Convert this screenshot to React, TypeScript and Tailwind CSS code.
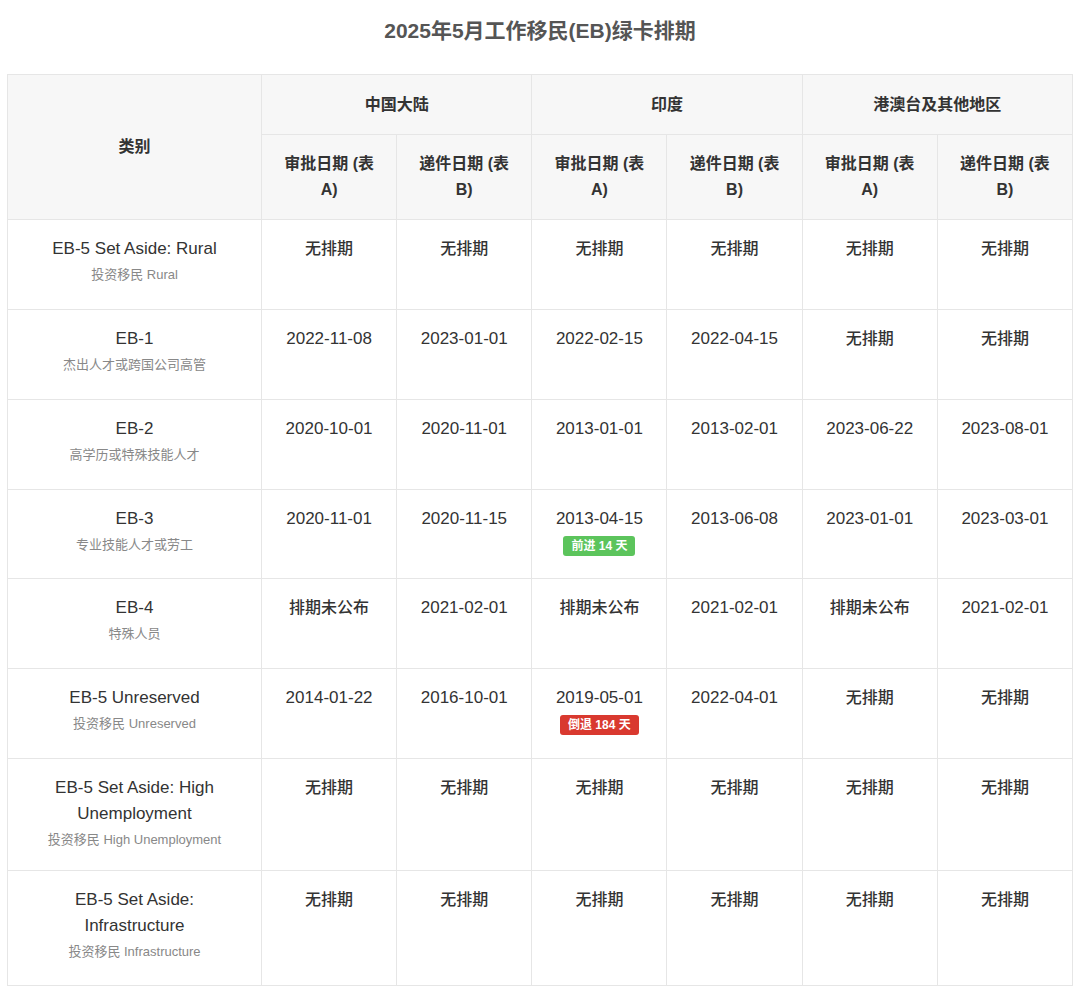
const font = { fontFamily: '"Liberation Sans", "Noto Sans CJK SC", sans-serif' };

type Cell = string | { v: string; tag: string; up: boolean };

const rows: { name: string; sub: string; h: string; cells: Cell[] }[] = [
  { name: "EB-5 Set Aside: Rural", sub: "投资移民 Rural", h: "h-[90px]", cells: ["无排期", "无排期", "无排期", "无排期", "无排期", "无排期"] },
  { name: "EB-1", sub: "杰出人才或跨国公司高管", h: "h-[90px]", cells: ["2022-11-08", "2023-01-01", "2022-02-15", "2022-04-15", "无排期", "无排期"] },
  { name: "EB-2", sub: "高学历或特殊技能人才", h: "h-[90px]", cells: ["2020-10-01", "2020-11-01", "2013-01-01", "2013-02-01", "2023-06-22", "2023-08-01"] },
  { name: "EB-3", sub: "专业技能人才或劳工", h: "h-[89px]", cells: ["2020-11-01", "2020-11-15", { v: "2013-04-15", tag: "前进 14 天", up: true }, "2013-06-08", "2023-01-01", "2023-03-01"] },
  { name: "EB-4", sub: "特殊人员", h: "h-[90px]", cells: ["排期未公布", "2021-02-01", "排期未公布", "2021-02-01", "排期未公布", "2021-02-01"] },
  { name: "EB-5 Unreserved", sub: "投资移民 Unreserved", h: "h-[90px]", cells: ["2014-01-22", "2016-10-01", { v: "2019-05-01", tag: "倒退 184 天", up: false }, "2022-04-01", "无排期", "无排期"] },
  { name: "EB-5 Set Aside: High Unemployment", sub: "投资移民 High Unemployment", h: "h-[112px]", cells: ["无排期", "无排期", "无排期", "无排期", "无排期", "无排期"] },
  { name: "EB-5 Set Aside: Infrastructure", sub: "投资移民 Infrastructure", h: "h-[115px]", cells: ["无排期", "无排期", "无排期", "无排期", "无排期", "无排期"] },
];

const bd = "border border-[#e6e6e6]";

export default function App() {
  return (
    <div className="w-[1080px] h-[987px] overflow-hidden bg-white text-[#333]" style={font}>
      <h1 className="text-center text-[21px] font-bold text-[#555] pt-[16px] pb-[28px] leading-[30px]">
        2025年5月工作移民(EB)绿卡排期
      </h1>
      <div className="px-[7px]">
        <table className="w-full border-collapse table-fixed text-[17px]">
          <colgroup>
            <col className="w-[254px]" />
            <col /><col /><col /><col /><col /><col />
          </colgroup>
          <thead className="bg-[#f7f7f7] font-bold text-[16px]">
            <tr className="h-[60px]">
              <th rowSpan={2} className={bd}>类别</th>
              <th colSpan={2} className={bd}>中国大陆</th>
              <th colSpan={2} className={bd}>印度</th>
              <th colSpan={2} className={bd}>港澳台及其他地区</th>
            </tr>
            <tr className="h-[85px]">
              {["审批日期 (表A)", "递件日期 (表B)", "审批日期 (表A)", "递件日期 (表B)", "审批日期 (表A)", "递件日期 (表B)"].map((t, i) => (
                <th key={i} className={`${bd} px-4 leading-[26px]`}>{t}</th>
              ))}
            </tr>
          </thead>
          <tbody>
            {rows.map((r) => (
              <tr key={r.name} className={r.h}>
                <td className={`${bd} align-top text-center px-5 pt-[16px] leading-[26px]`}>
                  <div>{r.name}</div>
                  <div className="text-[13px] text-[#888] leading-[22px] mt-[2px]">{r.sub}</div>
                </td>
                {r.cells.map((c, i) => (
                  <td key={i} className={`${bd} align-top text-center pt-[16px] leading-[26px] ${typeof c === "string" && !c.startsWith("20") ? "font-medium text-[16px]" : ""}`}>
                    {typeof c === "string" ? c : (
                      <div>
                        <div>{c.v}</div>
                        <span className={`inline-block mt-[4px] px-[8px] rounded-[3px] text-[12px] leading-[20px] font-bold text-white ${c.up ? "bg-[#5cc45c]" : "bg-[#d9392f]"}`}>{c.tag}</span>
                      </div>
                    )}
                  </td>
                ))}
              </tr>
            ))}
          </tbody>
        </table>
      </div>
    </div>
  );
}
